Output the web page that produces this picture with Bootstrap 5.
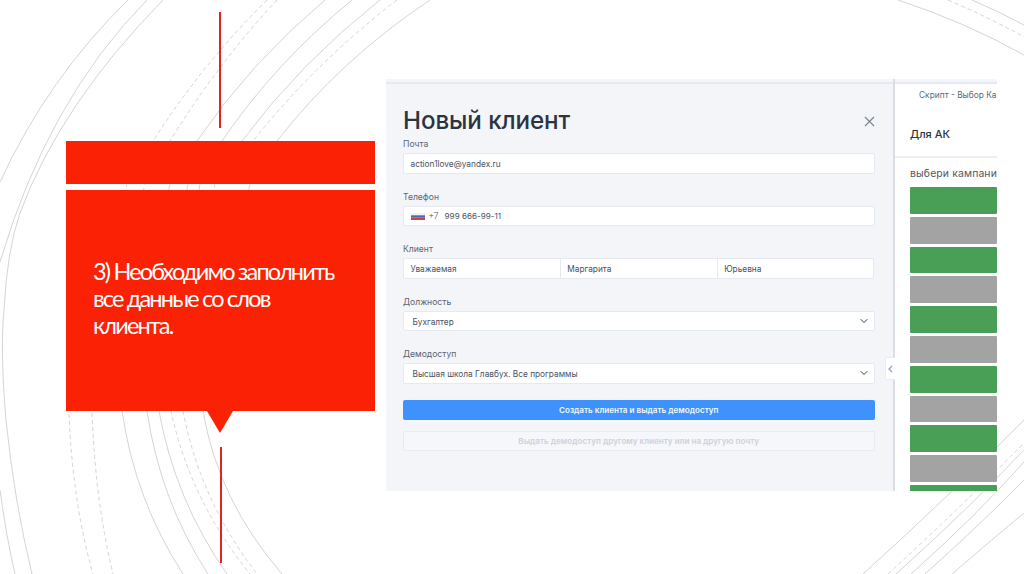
<!DOCTYPE html>
<html lang="ru">
<head>
<meta charset="utf-8">
<title>Новый клиент</title>
<link href="https://cdn.jsdelivr.net/npm/bootstrap@5.3.0/dist/css/bootstrap.min.css" rel="stylesheet">
<style>
html,body{margin:0;height:574px;overflow:hidden;background:#fff}
body{font-family:"Inter","Liberation Sans",sans-serif;color:#3d4654}
.slide-area{width:1024px;height:574px;position:relative;overflow:hidden}
.deco{position:absolute;inset:0;width:1024px;height:574px}
.deco path{fill:none;stroke:#c9c9c9;stroke-width:.8}
.deco .dash{stroke-dasharray:4 3}
.slide-row{position:relative;padding-left:66px;height:574px;gap:11px}
.red-col{width:309px;padding-top:12px}
.rule{width:2px;height:116px;background:#e3241b}
.rule-top{margin-left:152.5px;margin-bottom:13px}
.rule-bot{margin-left:153.5px;margin-top:14px}
.red-bar{height:42.5px;background:#fa2104;margin-bottom:6px;margin-left:-.5px}
.red-box{height:221.5px;background:#fa2104;padding:0 0 4px 27px;color:#fff;font-family:"Lato","Liberation Sans",sans-serif;font-size:23.5px;line-height:27px;letter-spacing:-1.83px}
.red-tip{width:0;height:0;margin-left:141px;border-left:13px solid transparent;border-right:13px solid transparent;border-top:22px solid #fa2104}
.shot{width:611px;height:412px;margin-top:79px;position:relative;overflow:hidden;background:#fff}
.form-pane{width:509px;flex:none;background:#f3f5f9;border-right:2px solid #d9dde6;padding:0 18.5px 0 17px;position:relative}
.top-strip{height:5px;margin:0 -18.5px 0 -17px;border-bottom:2px solid #e6e9f1;background:#f3f5f9}
.title-row{height:55px;padding-top:18px;margin-right:-1px}
.form-title{font-size:24.2px;font-weight:500;line-height:33px;margin:0;color:#2c3440;letter-spacing:-.1px}
.close-ic{width:11px;height:11px;margin-right:1px;margin-top:1px}
.fld-label{font-size:8.6px;line-height:11px;margin:0 0 3px;color:#5b6471;display:block}
.fld{margin-bottom:18px}
.form-control.slim,.form-select.slim{font-size:8.3px;line-height:11px;height:20.5px;padding:5px 6.5px 3px;border:1px solid #e6e9f0;border-radius:2px;color:#4a525e;background-color:#fff;box-shadow:none}
.form-select.slim{padding-left:8.5px;background-size:10px 8px;background-position:right 5px center}
.names .form-control{border-radius:0;margin-left:-1px}
.names .form-control:first-child{margin-left:0;border-radius:2px 0 0 2px}
.names .form-control:last-child{border-radius:0 2px 2px 0}
.flag{width:14px;height:7px;margin-right:4px;flex:none}
.cc{color:#7a8290;margin-right:6px;font-size:8.4px}
.phone-num{font-size:8.1px}
.btn.make{display:block;width:100%;height:20.5px;margin-top:-2px;padding:0;background:#3f92fb;border:0;border-radius:2px;color:#f4f8ff;font-size:8.1px;font-weight:600;line-height:20px}
.btn.other{display:block;width:100%;height:20.5px;margin-top:10.5px;padding:0;background:#f6f7fb;border:1px solid #e9ebf1;border-radius:2px;color:#ccd1dc;font-size:8.1px;font-weight:600;line-height:18px;opacity:1}
.tab-toggle{position:absolute;right:-2px;top:278px;width:10px;height:23px;background:#fff;border:1px solid #e8ebf1;border-right:0;border-radius:2px 0 0 2px;z-index:2}
.side-pane{flex:1;min-width:0;background:#fff;overflow:hidden;white-space:nowrap}
.side-strip{height:5px;background:#f3f5f9;border-bottom:2px solid #e6e9f1}
.side-crumb{font-size:8.4px;line-height:11px;color:#5f6875;padding:6px 0 0 24px;height:27px}
.side-name{height:47px;padding:15px 0 0 15px;font-size:11px;font-weight:500;line-height:16px;color:#2c3440;border-bottom:2px solid #eceef3}
.side-hint{font-size:10.4px;line-height:14px;letter-spacing:.15px;padding:9px 0 0 15px;height:29px;color:#4f5864}
.bars{padding-left:15px;gap:3px}
.cbar{height:26.8px;flex:none;border-radius:1px}
.cbar-g{background:#4a9f57}
.cbar-x{background:#a3a3a3}
</style>
</head>
<body>
<div class="slide-area">
<svg class="deco" viewBox="0 0 1024 574" aria-hidden="true">
<path d="M128 0Q48 78 0 182"/>
<path d="M147 0Q48 100 0 262"/>
<path d="M163 0Q60 105 20 213Q7 250 4 310Q0 350 6 420Q14 500 32 574"/>
<path d="M0 490Q6 535 15 574"/>
<path class="dash" d="M267 0Q203 63 153 141L127 184L69 411Q72 500 93 574"/>
<path class="dash" d="M277 0Q218 63 170 141L145 184L92 411Q95 500 113 574"/>
<path d="M325 0Q250 63 197 141L170 184L122 411Q135 500 183 574"/>
<path d="M352 0Q275 63 222 141L188 184L147 411Q160 500 208 574"/>
<path d="M380 0Q300 63 242 141L200 184L159 411Q175 500 227 574"/>
<path class="dash" d="M397 0Q315 63 253 141L215 184L171 411Q190 500 250 574"/>
<path d="M430 0Q340 60 277 141L250 184L203 411Q218 500 282 574"/>
<path class="dash" d="M183 411Q200 500 257 574"/>
<path d="M898 0Q965 22 1024 55"/>
<path class="dash" d="M948 0Q990 18 1024 37"/>
<path d="M972 0Q1000 12 1024 25"/>
<path d="M863 574Q945 500 1024 420"/>
<path class="dash" d="M888 574Q960 508 1024 443"/>
<path d="M896 574Q965 512 1024 450"/>
<path d="M911 574Q975 517 1024 462"/>
<path d="M925 574Q985 520 1024 480"/>
<path d="M952 574Q995 537 1024 513"/>
</svg>
<div class="slide-row d-flex">
  <div class="red-col">
    <div class="rule rule-top"></div>
    <div class="red-bar"></div>
    <div class="red-box d-flex align-items-center">
      <div>3) Необходимо заполнить<br>все данные со слов<br>клиента.</div>
    </div>
    <div class="red-tip"></div>
    <div class="rule rule-bot"></div>
  </div>
  <div class="shot d-flex">
    <div class="form-pane">
      <div class="top-strip"></div>
      <div class="title-row d-flex justify-content-between align-items-center">
        <h1 class="form-title">Новый клиент</h1>
        <svg class="close-ic" viewBox="0 0 11 11"><path d="M1 1L10 10M10 1L1 10" stroke="#7d8694" stroke-width="1.2" fill="none"/></svg>
      </div>
      <div class="fld">
        <span class="fld-label">Почта</span>
        <div class="form-control slim">action1love@yandex.ru</div>
      </div>
      <div class="fld">
        <span class="fld-label">Телефон</span>
        <div class="form-control slim d-flex align-items-center">
          <svg class="flag" viewBox="0 0 14 7"><rect width="14" height="2.3" fill="#f2f3f7"/><rect y="2.3" width="14" height="2.4" fill="#4d68b0"/><rect y="4.7" width="14" height="2.3" fill="#c9434f"/></svg>
          <span class="cc">+7</span><span class="phone-num">999 666-99-11</span>
        </div>
      </div>
      <div class="fld">
        <span class="fld-label">Клиент</span>
        <div class="names d-flex">
          <div class="form-control slim">Уважаемая</div>
          <div class="form-control slim">Маргарита</div>
          <div class="form-control slim">Юрьевна</div>
        </div>
      </div>
      <div class="fld">
        <span class="fld-label">Должность</span>
        <div class="form-select slim">Бухгалтер</div>
      </div>
      <div class="fld">
        <span class="fld-label">Демодоступ</span>
        <div class="form-select slim">Высшая школа Главбух. Все программы</div>
      </div>
      <button type="button" class="btn make">Создать клиента и выдать демодоступ</button>
      <button type="button" class="btn other">Выдать демодоступ другому клиенту или на другую почту</button>
      <div class="tab-toggle d-flex align-items-center justify-content-center">
        <svg width="5" height="8" viewBox="0 0 5 8"><path d="M4 1L1 4L4 7" stroke="#8ba0c6" stroke-width="1.2" fill="none"/></svg>
      </div>
    </div>
    <div class="side-pane">
      <div class="side-strip"></div>
      <div class="side-crumb">Скрипт - Выбор Ка</div>
      <div class="side-name">Для АК</div>
      <div class="side-hint">выбери кампани</div>
      <div class="bars d-flex flex-column">
        <div class="cbar cbar-g"></div><div class="cbar cbar-x"></div>
        <div class="cbar cbar-g"></div><div class="cbar cbar-x"></div>
        <div class="cbar cbar-g"></div><div class="cbar cbar-x"></div>
        <div class="cbar cbar-g"></div><div class="cbar cbar-x"></div>
        <div class="cbar cbar-g"></div><div class="cbar cbar-x"></div>
        <div class="cbar cbar-g"></div>
      </div>
    </div>
  </div>
</div>
</div>
<script src="https://cdn.jsdelivr.net/npm/bootstrap@5.3.0/dist/js/bootstrap.bundle.min.js"></script>
</body>
</html>
